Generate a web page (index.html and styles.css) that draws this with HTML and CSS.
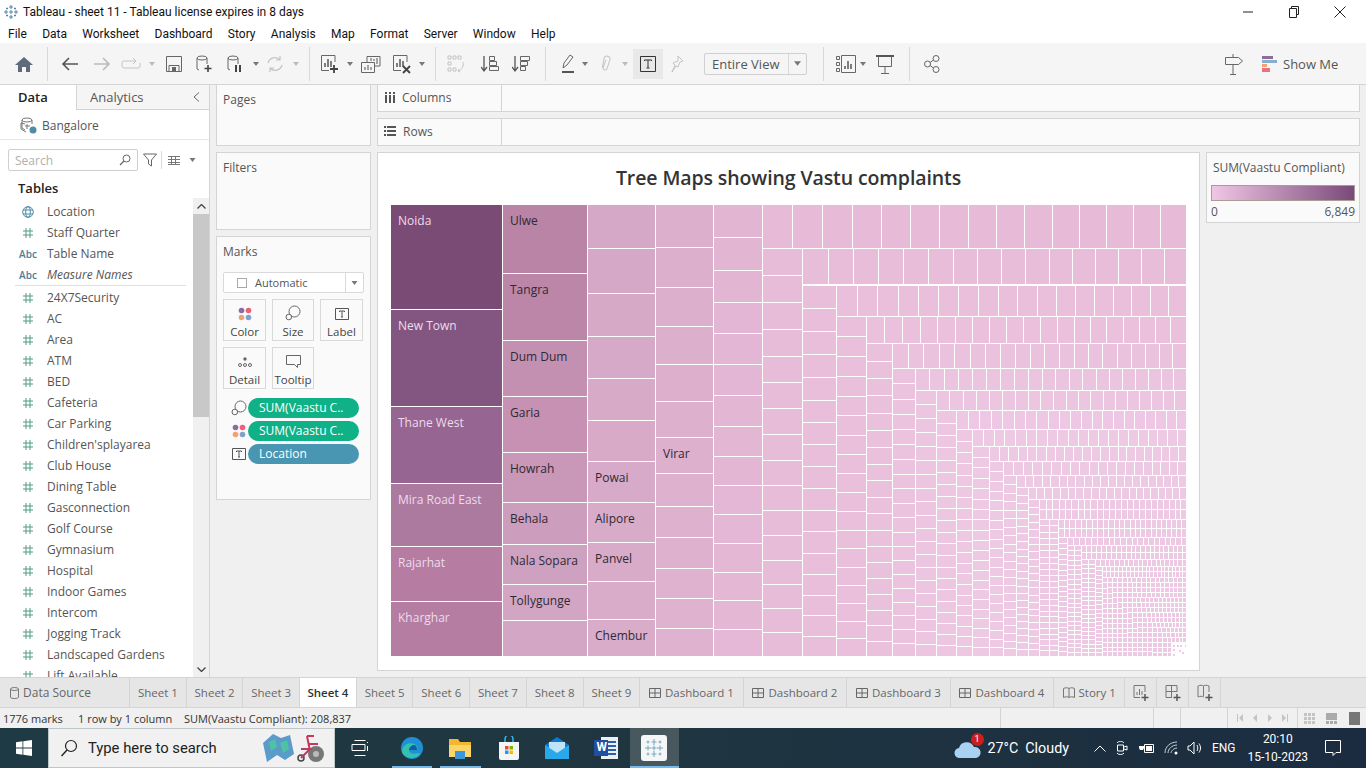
FILE: index.html
```html
<!DOCTYPE html>
<html lang="en">
<head>
  <meta charset="UTF-8" />
  <title>Tableau - sheet 11 - Tableau license expires in 8 days</title>
  <link rel="stylesheet" href="styles.css">
</head>
<body>
  <svg class="defs" width="0" height="0">
    <symbol id="hash" viewBox="0 0 12 12"><path d="M4 1v10M8 1v10M1 4h10M1 8h10" fill="none" stroke="#4d9e80" stroke-width="1"/></symbol>
    <symbol id="caret" viewBox="0 0 6 4"><path d="M0 0h6L3 4z" fill="#777"/></symbol>
    <symbol id="caret-off" viewBox="0 0 6 4"><path d="M0 0h6L3 4z" fill="#bbb"/></symbol>
    <symbol id="t-box" viewBox="0 0 14 14"><path d="M.5 1.500h13v11H.5zM4.500 5V4h5v1M7 4v6M6 10h2" fill="none" stroke="#555"/></symbol>
    <symbol id="size" viewBox="0 0 16 16"><circle cx="9.500" cy="6.500" r="5.500" fill="#fafafa" stroke="#666"/><circle cx="3.800" cy="12" r="2.800" fill="#fafafa" stroke="#666"/></symbol>
    <symbol id="dots" viewBox="0 0 14 14"><circle cx="3.500" cy="3.500" r="2.800" fill="#8a6d9c"/><circle cx="10.500" cy="3.500" r="2.800" fill="#ef5f75"/><circle cx="3.500" cy="10.500" r="2.800" fill="#efa373"/><circle cx="10.500" cy="10.500" r="2.800" fill="#7fa3cf"/></symbol>
    <symbol id="dash" viewBox="0 0 12 12"><path d="M.5 1.500h11v9H.5zM.5 6h11M6 1.500v9" fill="none" stroke="#666"/></symbol>
    <symbol id="add" viewBox="0 0 18 18"><path d="M13 8V1.500H2v12h6" fill="none" stroke="#777"/><path d="M5 11V8M7.500 11V5M10 11V7" stroke="#777"/><path d="M13 10v7M9.500 13.500h7" stroke="#555" stroke-width="1.500"/></symbol>
  </svg>

  <header class="titlebar">
    <svg class="app-logo" width="16" height="16" viewBox="0 0 16 16"><path d="M8 1v4M6 3h4M8 11v4M6 13h4M1 8h4M3 6v4M11 8h4M13 6v4M8 6v4M6 8h4M4 3.500v2M3 4.500h2M12 3.500v2M11 4.500h2M4 10.500v2M3 11.500h2M12 10.500v2M11 11.500h2" stroke="#4f86a8" fill="none"/></svg>
    <span class="title-text">Tableau - sheet 11 - Tableau license expires in 8 days</span>
    <div class="win-btns">
      <svg width="12" height="12" viewBox="0 0 12 12"><path d="M1 6h10" stroke="#222"/></svg>
      <svg width="12" height="12" viewBox="0 0 12 12"><path d="M3.500 2.500V.5h7v8h-2M1.500 2.500h7v9h-7z" fill="none" stroke="#222"/></svg>
      <svg width="12" height="12" viewBox="0 0 12 12"><path d="M.5.5l11 11M11.500.5l-11 11" stroke="#222"/></svg>
    </div>
  </header>

  <nav class="menubar">
    <span>File</span><span>Data</span><span>Worksheet</span><span>Dashboard</span><span>Story</span><span>Analysis</span><span>Map</span><span>Format</span><span>Server</span><span>Window</span><span>Help</span>
  </nav>

  <div class="toolbar">
    <svg width="18" height="16" viewBox="0 0 18 16"><path d="M9 1L0 9h3v7h4v-5h4v5h4V9h3z" fill="#5d6b7a"/></svg>
    <i class="sep"></i>
    <svg width="18" height="16" viewBox="0 0 18 16"><path d="M17 8H2M8 2L2 8l6 6" fill="none" stroke="#555" stroke-width="1.600"/></svg>
    <svg width="18" height="16" viewBox="0 0 18 16"><path d="M1 8h15M10 2l6 6-6 6" fill="none" stroke="#bbb" stroke-width="1.600"/></svg>
    <svg width="20" height="14" viewBox="0 0 20 14"><path d="M14 4H3a2 2 0 0 0-2 2v3a2 2 0 0 0 2 2h14a2 2 0 0 0 2-2V6M12 1l3 3-3 3" fill="none" stroke="#c4c4c4"/></svg>
    <svg width="6" height="4"><use href="#caret-off"/></svg>
    <svg width="16" height="16" viewBox="0 0 16 16"><path d="M.5.5h15v15H.5zM3 9.500h10v6H3z" fill="none" stroke="#666"/><path d="M6 11h4v4H6z" fill="#666"/></svg>
    <svg width="18" height="18" viewBox="0 0 18 18"><ellipse cx="6" cy="3" rx="5" ry="2" fill="none" stroke="#666"/><path d="M1 3v11l2 1M11 3v6" fill="none" stroke="#666"/><path d="M12 10v7M8.500 13.500h7" stroke="#444" stroke-width="1.600"/></svg>
    <svg width="18" height="18" viewBox="0 0 18 18"><ellipse cx="6" cy="3" rx="5" ry="2" fill="none" stroke="#666"/><path d="M1 3v11l2 1M11 3v6" fill="none" stroke="#666"/><path d="M9 10v7M13 10v7" stroke="#444" stroke-width="2"/></svg>
    <svg width="6" height="4"><use href="#caret"/></svg>
    <svg width="18" height="18" viewBox="0 0 18 18"><path d="M2 8a7 7 0 0 1 12-3M16 10a7 7 0 0 1-12 3M14 1v4h-4M4 17v-4h4" fill="none" stroke="#c4c4c4" stroke-width="1.200"/></svg>
    <svg width="6" height="4"><use href="#caret-off"/></svg>
    <i class="sep"></i>
    <svg width="20" height="20" viewBox="0 0 20 20"><path d="M15 8V1.500H1.500v15H9" fill="none" stroke="#666"/><path d="M5 13V9M8 13V5M11 13V7" stroke="#555" stroke-width="1.500"/><path d="M14 11v8M10 15h8" stroke="#444" stroke-width="1.800"/></svg>
    <svg width="6" height="4"><use href="#caret"/></svg>
    <svg width="20" height="18" viewBox="0 0 20 18"><path d="M6 7V1.500h13V11h-5" fill="none" stroke="#666"/><path d="M.5 7.500h13v10H.5z" fill="#f5f5f5" stroke="#666"/><path d="M10 6V3M13 6V4M16 9V3M4 15v-3M7 15v-5M10 15v-3" stroke="#555"/></svg>
    <svg width="20" height="20" viewBox="0 0 20 20"><path d="M15 8V1.500H1.500v15H9" fill="none" stroke="#666"/><path d="M5 13V9M8 13V5M11 13V7" stroke="#555" stroke-width="1.500"/><path d="M11 12l7 7M18 12l-7 7" stroke="#444" stroke-width="1.800"/></svg>
    <svg width="6" height="4"><use href="#caret"/></svg>
    <i class="sep"></i>
    <svg width="18" height="18" viewBox="0 0 18 18"><path d="M1 1h3v3H1zM6 1h3v3H6zM11 1h3v3h-3zM1 7h3v3H1zM1 13h3v3H1zM6 13h3v3H6z" fill="none" stroke="#c4c4c4"/><path d="M16 7c1 4-1 8-5 9M12 14l-1 2 2 1" fill="none" stroke="#c4c4c4"/></svg>
    <svg width="18" height="18" viewBox="0 0 18 18"><path d="M3 1v14M0 12l3 4 3-4" fill="none" stroke="#555" stroke-width="1.300"/><path d="M8.500 1.500h5v4h-5zM8.500 6.500h7v4h-7zM8.500 11.500h9v4h-9z" fill="none" stroke="#666"/></svg>
    <svg width="18" height="18" viewBox="0 0 18 18"><path d="M3 1v14M0 12l3 4 3-4" fill="none" stroke="#555" stroke-width="1.300"/><path d="M8.500 1.500h9v4h-9zM8.500 6.500h7v4h-7zM8.500 11.500h5v4h-5z" fill="none" stroke="#666"/></svg>
    <i class="sep"></i>
    <svg width="14" height="20" viewBox="0 0 14 20"><path d="M2 14l1-5 6-8 3 2-6 8z" fill="none" stroke="#666"/><path d="M1 18h12" stroke="#555" stroke-width="2"/></svg>
    <svg width="6" height="4"><use href="#caret"/></svg>
    <svg width="12" height="20" viewBox="0 0 12 20"><path d="M3 14V5a3 3 0 0 1 6 0l-1 9a2 2 0 0 1-4 0l1-8" fill="none" stroke="#c4c4c4" transform="rotate(12 6 10)"/></svg>
    <svg width="6" height="4"><use href="#caret-off"/></svg>
    <div class="tool-on"><svg width="16" height="16" viewBox="0 0 16 16"><path d="M.5.5h15v15H.5zM4.500 5V4h7v1M8 4v8M6.500 12h3" fill="none" stroke="#333"/></svg></div>
    <svg width="14" height="18" viewBox="0 0 14 18"><path d="M8 1l5 5-3 1-2 5-2-1-4 6 3-7-2-2 5-2z" fill="none" stroke="#c4c4c4"/></svg>
    <div class="fit-select"><span>Entire View</span><b><svg width="7" height="5"><use href="#caret"/></svg></b></div>
    <i class="sep"></i>
    <div class="tool-pair">
      <svg width="20" height="18" viewBox="0 0 20 18"><path d="M.5 1.500h3v3h-3zM.5 7.500h3v3h-3zM.5 13.500h3v3h-3zM5.500.5h14v17h-14z" fill="none" stroke="#666"/><path d="M9 14v-3M12 14V6M15 14V9" stroke="#555" stroke-width="1.500"/></svg>
      <svg width="6" height="4"><use href="#caret"/></svg>
    </div>
    <svg width="18" height="20" viewBox="0 0 18 20"><path d="M0 2h18" stroke="#555" stroke-width="2"/><path d="M2.500 2.500v10h13v-10M9 13v6M5 19.500h8" fill="none" stroke="#666"/></svg>
    <i class="sep"></i>
    <svg width="16" height="18" viewBox="0 0 16 18"><circle cx="3.500" cy="9" r="3" fill="none" stroke="#666"/><circle cx="12" cy="3.500" r="3" fill="none" stroke="#666"/><circle cx="12" cy="14.500" r="3" fill="none" stroke="#666"/><path d="M6 7.500l3.500-2.500M6 10.500l3.500 2.500" stroke="#666"/></svg>
    <div></div>
    <svg width="18" height="22" viewBox="0 0 18 22"><path d="M.5 4.500h13l4 3.500-4 3.500H.5zM8 1v3.500M8 11.500V21M5 21.500h6" fill="none" stroke="#666"/></svg>
    <div class="show-me">
      <svg class="show-me-icon" width="15" height="16" viewBox="0 0 15 16"><path d="M0 0h11v3H0z" fill="#8a6d9c"/><path d="M0 4h15v3H0z" fill="#85aed0"/><path d="M0 8h5v3H0z" fill="#efa373"/><path d="M0 12h8v4H0z" fill="#ef6f80"/></svg>
      <span>Show Me</span>
    </div>
  </div>

  <main class="workspace">
    <aside class="data-pane">
      <div class="pane-tabs">
        <div class="pane-tab active">Data</div>
        <div class="pane-tab">Analytics</div>
        <svg class="collapse" width="7" height="10" viewBox="0 0 7 10"><path d="M6 .5L1 5l5 4.500" fill="none" stroke="#666"/></svg>
      </div>
      <div class="source">
        <svg width="17" height="17" viewBox="0 0 17 17"><ellipse cx="7" cy="3" rx="5" ry="2" fill="none" stroke="#777"/><path d="M2 3v8l3 2M12 3v4M5 7l-4-1v6l5 3" fill="none" stroke="#777"/><path d="M5 9h5M7 7v5" stroke="#777"/><circle cx="13" cy="13" r="3.500" fill="#4e8ca8"/></svg>
        <span>Bangalore</span>
      </div>
      <div class="search-row">
        <div class="search-box"><span>Search</span>
          <svg width="12" height="12" viewBox="0 0 12 12"><circle cx="7.500" cy="4.500" r="3.500" fill="none" stroke="#666"/><path d="M5 7l-4 4" stroke="#666" stroke-width="1.300"/></svg>
        </div>
        <svg width="14" height="14" viewBox="0 0 14 14"><path d="M.5 1h13L8.500 7v6l-3-2V7z" fill="none" stroke="#666"/></svg>
        <i class="vline"></i>
        <svg width="12" height="9" viewBox="0 0 12 9"><path d="M0 .5h12M0 3.500h12M0 6.500h12M0 8.500h12M3.500 0v9M7.500 0v9" stroke="#777"/></svg>
        <svg class="search-caret" width="7" height="4"><use href="#caret"/></svg>
      </div>
      <h2 class="tables-head">Tables</h2>
      <div class="fields">
        <ul class="field-list">
          <li><span class="ficon"><svg width="12" height="12" viewBox="0 0 12 12"><circle cx="6" cy="6" r="5.300" fill="none" stroke="#4e8ca8"/><ellipse cx="6" cy="6" rx="2.300" ry="5.300" fill="none" stroke="#4e8ca8"/><path d="M1 4h10M1 8h10" stroke="#4e8ca8"/></svg></span>Location</li>
          <li><span class="ficon"><svg width="12" height="12"><use href="#hash"/></svg></span>Staff Quarter</li>
          <li><span class="ficon abc">Abc</span>Table Name</li>
          <li class="last-dim"><span class="ficon abc">Abc</span><em>Measure Names</em></li>
          <li><span class="ficon"><svg width="12" height="12"><use href="#hash"/></svg></span>24X7Security</li>
          <li><span class="ficon"><svg width="12" height="12"><use href="#hash"/></svg></span>AC</li>
          <li><span class="ficon"><svg width="12" height="12"><use href="#hash"/></svg></span>Area</li>
          <li><span class="ficon"><svg width="12" height="12"><use href="#hash"/></svg></span>ATM</li>
          <li><span class="ficon"><svg width="12" height="12"><use href="#hash"/></svg></span>BED</li>
          <li><span class="ficon"><svg width="12" height="12"><use href="#hash"/></svg></span>Cafeteria</li>
          <li><span class="ficon"><svg width="12" height="12"><use href="#hash"/></svg></span>Car Parking</li>
          <li><span class="ficon"><svg width="12" height="12"><use href="#hash"/></svg></span>Children'splayarea</li>
          <li><span class="ficon"><svg width="12" height="12"><use href="#hash"/></svg></span>Club House</li>
          <li><span class="ficon"><svg width="12" height="12"><use href="#hash"/></svg></span>Dining Table</li>
          <li><span class="ficon"><svg width="12" height="12"><use href="#hash"/></svg></span>Gasconnection</li>
          <li><span class="ficon"><svg width="12" height="12"><use href="#hash"/></svg></span>Golf Course</li>
          <li><span class="ficon"><svg width="12" height="12"><use href="#hash"/></svg></span>Gymnasium</li>
          <li><span class="ficon"><svg width="12" height="12"><use href="#hash"/></svg></span>Hospital</li>
          <li><span class="ficon"><svg width="12" height="12"><use href="#hash"/></svg></span>Indoor Games</li>
          <li><span class="ficon"><svg width="12" height="12"><use href="#hash"/></svg></span>Intercom</li>
          <li><span class="ficon"><svg width="12" height="12"><use href="#hash"/></svg></span>Jogging Track</li>
          <li><span class="ficon"><svg width="12" height="12"><use href="#hash"/></svg></span>Landscaped Gardens</li>
          <li><span class="ficon"><svg width="12" height="12"><use href="#hash"/></svg></span>Lift Available</li>
        </ul>
        <div class="scrollbar">
          <svg width="9" height="5" viewBox="0 0 9 5"><path d="M.5 4.500l4-4 4 4" fill="none" stroke="#444" stroke-width="1.300"/></svg>
          <div class="scroll-track"><div class="scroll-thumb"></div></div>
          <svg width="9" height="5" viewBox="0 0 9 5"><path d="M.5.5l4 4 4-4" fill="none" stroke="#444" stroke-width="1.300"/></svg>
        </div>
      </div>
    </aside>

    <section class="cards">
      <div class="card card-pages">Pages</div>
      <div class="card card-filters">Filters</div>
      <div class="card card-marks">
        <div>Marks</div>
        <div class="mark-select">
          <span class="mark-check"></span><span class="mark-type">Automatic</span>
          <b><svg width="7" height="4"><use href="#caret"/></svg></b>
        </div>
        <div class="mark-btns">
          <div class="mark-btn"><svg width="14" height="14"><use href="#dots"/></svg>Color</div>
          <div class="mark-btn"><svg width="16" height="16"><use href="#size"/></svg>Size</div>
          <div class="mark-btn"><svg width="14" height="14"><use href="#t-box"/></svg>Label</div>
          <div class="mark-btn"><svg width="14" height="14" viewBox="0 0 14 14"><circle cx="7" cy="4" r="1.700" fill="#666"/><circle cx="2" cy="10" r="1.500" fill="none" stroke="#666"/><circle cx="7" cy="10" r="1.500" fill="none" stroke="#666"/><circle cx="12" cy="10" r="1.500" fill="none" stroke="#666"/></svg>Detail</div>
          <div class="mark-btn"><svg width="15" height="15" viewBox="0 0 15 15"><path d="M.5 1.500h14v9h-3v3l-3-3h-8z" fill="none" stroke="#666"/></svg>Tooltip</div>
        </div>
        <div class="pills">
          <svg width="16" height="16"><use href="#size"/></svg><div class="pill green">SUM(Vaastu C..</div>
          <svg width="14" height="14"><use href="#dots"/></svg><div class="pill green">SUM(Vaastu C..</div>
          <svg width="14" height="14"><use href="#t-box"/></svg><div class="pill blue">Location</div>
        </div>
      </div>
    </section>

    <section class="canvas">
      <div class="shelf">
        <div class="shelf-label"><svg width="11" height="11" viewBox="0 0 11 11"><path d="M1 0h2v2H1zM5 0h2v2H5zM9 0h2v2H9zM1 3h2v8H1zM5 3h2v8H5zM9 3h2v8H9z" fill="#555"/></svg>Columns</div>
      </div>
      <div class="shelf">
        <div class="shelf-label"><svg width="12" height="10" viewBox="0 0 12 10"><path d="M0 0h2v2H0zM3 0h9v2H3zM0 4h2v2H0zM3 4h9v2H3zM0 8h2v2H0zM3 8h9v2H3z" fill="#555"/></svg>Rows</div>
      </div>
      <div class="view-row">
        <div class="view">
          <h1 class="view-title">Tree Maps showing Vastu complaints</h1>
          <svg id="treemap" class="treemap" width="795" height="451" viewBox="391 205 795 451"></svg>
        </div>
        <div class="legend">
          <div class="legend-title">SUM(Vaastu Compliant)</div>
          <div class="legend-bar"></div>
          <div class="legend-scale"><span>0</span><span>6,849</span></div>
        </div>
      </div>
    </section>
  </main>

  <div class="tabbar">
    <div class="tab tab-source"><svg width="9" height="12" viewBox="0 0 9 12"><ellipse cx="4.500" cy="2" rx="4" ry="1.500" fill="none" stroke="#777"/><path d="M.5 2v8c0 1 1.500 1.500 4 1.500s4-.5 4-1.500V2" fill="none" stroke="#777"/></svg>Data Source</div>
    <div class="tab tab-s1">Sheet 1</div>
    <div class="tab tab-s1">Sheet 2</div>
    <div class="tab tab-s1">Sheet 3</div>
    <div class="tab tab-s1 current">Sheet 4</div>
    <div class="tab tab-s1">Sheet 5</div>
    <div class="tab tab-s1">Sheet 6</div>
    <div class="tab tab-s1">Sheet 7</div>
    <div class="tab tab-s1">Sheet 8</div>
    <div class="tab tab-s1">Sheet 9</div>
    <div class="tab tab-dash"><svg width="12" height="12"><use href="#dash"/></svg>Dashboard 1</div>
    <div class="tab tab-dash"><svg width="12" height="12"><use href="#dash"/></svg>Dashboard 2</div>
    <div class="tab tab-dash"><svg width="12" height="12"><use href="#dash"/></svg>Dashboard 3</div>
    <div class="tab tab-dash"><svg width="12" height="12"><use href="#dash"/></svg>Dashboard 4</div>
    <div class="tab tab-story"><svg width="12" height="12" viewBox="0 0 12 12"><path d="M.5 1.500c2-1 4-1 5.500 0 1.500-1 3.500-1 5.500 0v9c-2-1-4-1-5.500 0-1.500-1-3.500-1-5.500 0zM6 1.500v9" fill="none" stroke="#777"/></svg>Story 1</div>
    <div class="tab tab-add"><svg width="18" height="18"><use href="#add"/></svg></div>
    <div class="tab tab-add"><svg width="18" height="18" viewBox="0 0 18 18"><path d="M13 8V1.500H2v12h6M2 7.500h11M7.500 1.500v12" fill="none" stroke="#777"/><path d="M13 10v7M9.500 13.500h7" stroke="#555" stroke-width="1.500"/></svg></div>
    <div class="tab tab-add"><svg width="18" height="18" viewBox="0 0 18 18"><path d="M13 8V2c-2-1-4-1-5.500 0C6 1 4 1 2 2v11c2-1 4-1 6 0M7.500 2v10" fill="none" stroke="#777"/><path d="M13 10v7M9.500 13.500h7" stroke="#555" stroke-width="1.500"/></svg></div>
  </div>

  <footer class="statusbar">
    <div class="status-main"><span>1776 marks</span><span>1 row by 1 column</span><span>SUM(Vaastu Compliant): 208,837</span></div>
    <i class="status-cell s1"></i><i class="status-cell s2"></i><i class="status-cell s3"></i>
    <div class="status-nav">
      <svg width="6" height="8" viewBox="0 0 6 8"><path d="M0 0h1v8H0zM6 0v8L2 4z" fill="#c4c4c4"/></svg>
      <svg width="6" height="8" viewBox="0 0 6 8"><path d="M5 0v8L1 4z" fill="#c4c4c4"/></svg>
      <svg width="6" height="8" viewBox="0 0 6 8"><path d="M1 0v8l4-4z" fill="#c4c4c4"/></svg>
      <svg width="6" height="8" viewBox="0 0 6 8"><path d="M0 0v8l4-4zM5 0h1v8H5z" fill="#c4c4c4"/></svg>
    </div>
    <div class="status-views">
      <svg width="11" height="11" viewBox="0 0 11 11"><path d="M0 0h3v3H0zM4 0h3v3H4zM8 0h3v3H8zM0 4h3v3H0zM4 4h3v3H4zM8 4h3v3H8zM0 8h3v3H0zM4 8h3v3H4zM8 8h3v3H8z" fill="#c4c4c4"/></svg>
      <svg width="11" height="11" viewBox="0 0 11 11"><path d="M0 0h11v7H0zM0 8h3v3H0zM4 8h3v3H4zM8 8h3v3H8z" fill="#aaa"/></svg>
      <svg width="11" height="13" viewBox="0 0 11 13"><path d="M0 0h11v13H0z" fill="#777"/></svg>
    </div>
  </footer>

  <div class="taskbar">
    <svg class="start" width="16" height="16" viewBox="0 0 16 16"><path d="M0 2.200l6.500-.9v6.200H0zM7.300 1.200L16 0v7.500H7.300zM0 8.400h6.500v6.300L0 13.800zM7.300 8.400H16V16l-8.700-1.200z" fill="#fff"/></svg>
    <div class="task-search">
      <svg width="18" height="18" viewBox="0 0 18 18"><circle cx="11" cy="7" r="5.500" fill="none" stroke="#222" stroke-width="1.200"/><path d="M7 11l-5.500 6" stroke="#222" stroke-width="1.400"/></svg>
      <span>Type here to search</span>
      <svg class="search-art" width="66" height="34" viewBox="0 0 66 34"><path d="M2 12L12 3l8 4 9-3 4 19-9 6-8-5-10 7z" fill="#5b9bc9"/><path d="M8 11l6-3 2 8-6 4zM19 12l7-3 2 9-6 4z" fill="#4ec2a5"/><path d="M46 5h7M46 5l3 15h9M48 13h9" fill="none" stroke="#c2395b" stroke-width="2"/><circle cx="55" cy="23" r="8" fill="#777"/><circle cx="55" cy="23" r="3" fill="#bbb"/><circle cx="40" cy="27" r="3" fill="none" stroke="#444" stroke-width="1.500"/><path d="M40 18h9l-9 9" fill="none" stroke="#c2395b" stroke-width="2"/></svg>
    </div>
    <div class="task-icons">
      <div class="task-app"><svg width="18" height="18" viewBox="0 0 18 18"><path d="M3.500 1.500h11M1 5.500h13v6H1zM3.500 16.500h11M16.500 3v1M16.500 7v5" fill="none" stroke="#fff"/></svg></div>
      <div class="task-app open"><svg width="24" height="24" viewBox="0 0 24 24"><circle cx="12" cy="12" r="11" fill="#1f8fd6"/><path d="M2 15c1-7 8-9 12-7 3 1 4 4 3 6H9c0 3 4 5 9 3l2 1c-3 4-9 5-13 3-3-1-5-3-5-6z" fill="#35c1b0"/><path d="M9 14c0-3 3-5 5-5s3 2 3 5z" fill="#0f5fa6"/></svg></div>
      <div class="task-app open"><svg width="24" height="22" viewBox="0 0 24 22"><path d="M1 2h9l2 3h11v15H1z" fill="#f2b632"/><path d="M1 8h22v12H1z" fill="#fbd568"/><path d="M7 14h10v8H7z" fill="#3a96dd"/></svg></div>
      <div class="task-app"><svg width="22" height="24" viewBox="0 0 22 24"><path d="M7 6V3a4 4 0 0 1 8 0v3" fill="none" stroke="#35b8e8" stroke-width="1.500"/><path d="M1 6h20v16a2 2 0 0 1-2 2H3a2 2 0 0 1-2-2z" fill="#f5f5f5"/><path d="M7 10h3.500v3.500H7z" fill="#e74c2e"/><path d="M11.500 10H15v3.500h-3.500z" fill="#7ab800"/><path d="M7 14.500h3.500V18H7z" fill="#1e9be8"/><path d="M11.500 14.500H15V18h-3.500z" fill="#fbb900"/></svg></div>
      <div class="task-app"><svg width="24" height="22" viewBox="0 0 24 22"><path d="M12 0L0 8v14h24V8z" fill="#0f78d4"/><path d="M4 5h16v9l-8 4-8-4z" fill="#bfe4f8"/><path d="M0 8l12 8 12-8v14H0z" fill="#29a8ea"/></svg></div>
      <div class="task-app word"><svg width="24" height="22" viewBox="0 0 24 22"><path d="M7 0h17v22H7z" fill="#e9eef7"/><path d="M14 5h8M14 9h8M14 13h8M14 17h8" stroke="#2b5fad" stroke-width="2"/><path d="M0 3h14v16H0z" fill="#1f4f9e"/></svg><span>W</span></div>
      <div class="task-app current"><svg width="26" height="26" viewBox="0 0 26 26"><rect width="26" height="26" rx="3" fill="#f4f6f7"/><path d="M13 4v6M10.500 7h5M13 16v6M10.500 19h5M4 13h6M7 10.500v5M16 13h6M19 10.500v5M13 10.500v5M10.500 13h5M7 5.500v3M5.500 7h3M19 5.500v3M17.500 7h3M7 17.500v3M5.500 19h3M19 17.500v3M17.500 19h3" stroke="#7aa6bd" fill="none"/></svg></div>
    </div>
    <div class="tray">
      <div class="weather">
        <svg width="28" height="24" viewBox="0 0 28 24"><path d="M6 22a5 5 0 0 1-1-10 8 8 0 0 1 15-1 5.500 5.500 0 0 1 2 11z" fill="#a9d1f2"/></svg>
        <span class="weather-badge">1</span>
      </div>
      <span class="temp">27°C&nbsp; Cloudy</span>
      <svg class="t-chev" width="12" height="7" viewBox="0 0 12 7"><path d="M.5 6.500L6 1l5.500 5.500" fill="none" stroke="#fff"/></svg>
      <svg class="t-meet" width="12" height="18" viewBox="0 0 12 18"><path d="M1 4c1-2 6-2 7 0M1 14c1 2 6 2 7 0M1.500 6h6v6h-6zM8 8l3-1v4l-3-1" fill="none" stroke="#fff"/></svg>
      <svg class="t-batt" width="16" height="12" viewBox="0 0 16 12"><path d="M5.500 2.500h9v8h-9z" fill="none" stroke="#fff"/><path d="M7 4h6v5H7zM1 0v4M4 0v4M0 4h5v2l-1 2H1L0 6z" fill="#fff"/></svg>
      <svg class="t-wifi" width="15" height="14" viewBox="0 0 15 14"><path d="M1 12C1 6 6 1 13 1M4 12c0-4 4-8 9-8M7 12c0-2 3-5 6-5" fill="none" stroke="#c9d1d6"/><circle cx="12" cy="12" r="1.500" fill="#fff"/></svg>
      <svg class="t-vol" width="16" height="14" viewBox="0 0 16 14"><path d="M1 5h2l4-4v12l-4-4H1zM10 4c1 2 1 4 0 6M12 2.500c2 3 2 6 0 9" fill="none" stroke="#fff"/></svg>
      <span class="t-lang">ENG</span>
      <div class="clock"><div>20:10</div><div>15-10-2023</div></div>
      <svg class="t-note" width="16" height="16" viewBox="0 0 16 16"><path d="M.5.5h15v12H11l-3 3v-3H.5z" fill="none" stroke="#fff"/></svg>
    </div>
  </div>

  <script src="chart.js"></script>
</body>
</html>
```

FILE: styles.css
```css
:root {
  --line: #d4d4d4;
  --panel: #fafafa;
  --bar: #f5f5f5;
  --text: #555555;
  --ui-font: "Open Sans", "Liberation Sans", sans-serif;
  --win-font: Roboto, "Liberation Sans", sans-serif;
}

* {
  box-sizing: border-box;
  margin: 0;
  padding: 0;
}

html, body {
  height: 768px;
  overflow: hidden;
}

body {
  display: flex;
  flex-direction: column;
  width: 1366px;
  background: #f5f5f5;
  color: var(--text);
  font: 12px var(--ui-font);
}

.defs { position: absolute; }
svg { display: block; flex: none; }

/* Window title + menu */
.titlebar {
  display: flex;
  align-items: center;
  height: 24px;
  padding-left: 3px;
  background: #fff;
  color: #111;
  font-family: var(--win-font);
}
.title-text { margin-left: 4px; }
.win-btns {
  display: flex;
  gap: 34px;
  margin-left: auto;
  margin-right: 20px;
}

.menubar {
  display: flex;
  align-items: center;
  gap: 15.300px;
  height: 19px;
  padding-left: 8px;
  background: #fff;
  color: #111;
  font-family: var(--win-font);
}

/* Toolbar: one track per tool, so each icon centres on its own place */
.toolbar {
  display: grid;
  grid-template-columns: 36px 11px 34px 30px 28px 14px 30px 32px 30px 10px 28px 14px 12px 30px 10px 32px 30px 10px 16px 26px 42px 20px 28px 18px 16px 26px 12px 34px 24px 133px 2px 54px 14px 34px 12px 1fr 28px 97px;
  align-items: center;
  justify-items: center;
  height: 41px;
  padding-left: 6px;
  padding-right: 21px;
  background: var(--bar);
}
.sep {
  display: block;
  width: 1px;
  height: 34px;
  background: #d9d9d9;
}
.tool-on {
  display: flex;
  align-items: center;
  justify-content: center;
  width: 30px;
  height: 30px;
  background: #e8e8e8;
}
.fit-select {
  display: flex;
  align-items: center;
  width: 103px;
  height: 22px;
  padding-left: 7px;
  background: var(--bar);
  border: 1px solid #cfcfcf;
  border-radius: 2px;
  font-size: 13px;
}
.fit-select span { flex: 1; }
.fit-select b {
  display: flex;
  align-items: center;
  justify-content: center;
  width: 18px;
  height: 100%;
  border-left: 1px solid #d9d9d9;
}
.tool-pair {
  display: flex;
  align-items: center;
  gap: 4px;
}
.show-me {
  display: flex;
  align-items: center;
  gap: 6px;
  justify-self: start;
  margin-left: 14px;
  font-size: 13px;
}

/* Main area */
.workspace {
  display: flex;
  height: 593px;
  gap: 6px;
  padding-right: 6px;
  border-top: 1px solid var(--line);
  background: #f0f0f0;
}

.data-pane {
  display: flex;
  flex-direction: column;
  width: 210px;
  background: #fff;
  border-right: 1px solid var(--line);
}
.pane-tabs {
  display: flex;
  align-items: center;
  height: 25px;
  background: var(--bar);
  border-bottom: 1px solid var(--line);
  font-size: 13px;
}
.pane-tab {
  width: 77px;
  height: 25px;
  padding: 3px 0 0 18px;
}
.pane-tab.active {
  background: #fff;
  border-right: 1px solid var(--line);
  color: #222;
  font-weight: 600;
}
.pane-tab:nth-child(2) { padding-left: 13px; width: 112px; }
.collapse { margin-left: 4px; }
.source {
  display: flex;
  align-items: center;
  gap: 5px;
  height: 30px;
  padding: 1px 0 0 20px;
  border-bottom: 1px solid #e6e6e6;
}
.search-row {
  display: flex;
  align-items: center;
  height: 22px;
  margin-top: 9px;
  padding-left: 8px;
}
.search-box {
  display: flex;
  align-items: center;
  justify-content: space-between;
  width: 130px;
  height: 22px;
  padding: 0 6px;
  border: 1px solid #cfcfcf;
  border-radius: 2px;
  color: #b0b0b0;
}
.search-row > svg:nth-child(2) { margin-left: 5px; }
.vline {
  display: block;
  width: 1px;
  height: 18px;
  margin: 0 6px 0 4px;
  background: #d9d9d9;
}
.search-caret { margin-left: 9px; }
.tables-head {
  margin: 8px 0 1px 18px;
  color: #222;
  font-size: 13px;
  font-weight: 600;
  line-height: 18px;
}
.fields {
  display: flex;
  flex: 1;
  min-height: 0;
  overflow: hidden;
}
.field-list {
  width: 193px;
  list-style: none;
  padding-top: 3px;
}
.field-list li {
  display: flex;
  align-items: center;
  height: 21px;
}
.last-dim { position: relative; }
.last-dim em { font-style: italic; }
.field-list li:nth-child(4) { margin-bottom: 2px; height: 21px; }
.field-list li:nth-child(4)::after {
  content: "";
  position: absolute;
  left: 15px;
  right: 7px;
  bottom: -1px;
  height: 1px;
  background: #e0e0e0;
}
.ficon {
  display: flex;
  align-items: center;
  justify-content: center;
  width: 26px;
  margin: 0 6px 0 15px;
}
.abc {
  color: #4e7c97;
  font-size: 10px;
  font-weight: 600;
}
.scrollbar {
  display: flex;
  flex-direction: column;
  align-items: center;
  width: 16px;
  background: #f0f0f0;
  padding: 6px 0 5px;
}
.scroll-track { flex: 1; width: 100%; margin: 5px 0; }
.scroll-thumb { height: 203px; background: #c8c8c8; }

/* Pages / Filters / Marks */
.cards {
  display: flex;
  flex-direction: column;
  gap: 6px;
  width: 155px;
  padding-bottom: 177px;
}
.card {
  padding: 6px 6px 0;
  background: var(--panel);
  border: 1px solid var(--line);
}
.card-pages { height: 61px; border-top: 0; }
.card-filters { height: 78px; }
.card-marks { flex: 1; }
.mark-select {
  display: flex;
  align-items: center;
  height: 21px;
  margin-top: 12px;
  background: #fff;
  border: 1px solid #d9d9d9;
  border-radius: 2px;
  font-size: 11px;
}
.mark-check {
  width: 10px;
  height: 10px;
  margin-left: 13px;
  border: 1px solid #aaa;
}
.mark-type { margin-left: 8px; flex: 1; }
.mark-select b {
  display: flex;
  align-items: center;
  justify-content: center;
  width: 18px;
  height: 100%;
  border-left: 1px solid #d9d9d9;
}
.mark-btns {
  display: grid;
  grid-template-columns: 43px 42px 43px;
  gap: 6px;
  margin-top: 6px;
}
.mark-btn {
  display: flex;
  flex-direction: column;
  align-items: center;
  justify-content: flex-end;
  gap: 3px;
  height: 42px;
  padding-bottom: 1px;
  border: 1px solid #d9d9d9;
  font-size: 11.500px;
  color: #444;
}
.pills {
  display: grid;
  grid-template-columns: 19px 111px;
  gap: 3px 0;
  justify-items: center;
  align-items: center;
  margin: 9px 0 0 6px;
}
.pill {
  justify-self: stretch;
  height: 20px;
  padding-left: 11px;
  border-radius: 10px;
  color: #fff;
  line-height: 19px;
}
.green { background: #0fb187; }
.blue { background: #4996b2; }

/* Shelves + view */
.canvas {
  display: flex;
  flex: 1;
  flex-direction: column;
  gap: 6px;
  padding-bottom: 6px;
}
.shelf {
  height: 28px;
  background: var(--panel);
  border: 1px solid var(--line);
}
.shelf:first-child { border-top: 0; height: 27px; }
.shelf-label {
  display: flex;
  align-items: center;
  gap: 7px;
  width: 124px;
  height: 100%;
  padding: 0 0 2px 6px;
  border-right: 1px solid var(--line);
}
.view-row {
  display: flex;
  flex: 1;
  gap: 6px;
  align-items: flex-start;
}
.view {
  display: flex;
  flex-direction: column;
  align-items: flex-start;
  width: 823px;
  height: 519px;
  padding: 0 13px;
  background: #fff;
  border: 1px solid var(--line);
}
.view-title {
  align-self: center;
  height: 52px;
  padding-top: 11px;
  color: #333;
  font-size: 19.500px;
  font-weight: 600;
  letter-spacing: -.1px;
  line-height: 28px;
}
.treemap text {
  font: 12px var(--ui-font);
}
.legend {
  flex: 1;
  height: 71px;
  padding: 6px 4px 0;
  background: var(--panel);
  border: 1px solid var(--line);
}
.legend-title { padding-left: 2px; margin-bottom: 9px; }
.legend-bar {
  height: 16px;
  background: linear-gradient(90deg, #f0c6e6, #7a4a78);
  border: 1px solid #a89c94;
}
.legend-scale {
  display: flex;
  justify-content: space-between;
  margin-top: 2px;
}

/* Sheet tabs */
.tabbar {
  display: flex;
  height: 31px;
  background: #e6e6e6;
  border-top: 1px solid var(--line);
  border-bottom: 1px solid var(--line);
  color: #666;
  font-size: 11.500px;
}
.tab {
  display: flex;
  align-items: center;
  justify-content: center;
  gap: 4px;
  border-right: 1px solid var(--line);
}
.tab-source { width: 130px; justify-content: flex-start; padding-left: 10px; font-size: 12px; }
.tab-s1 { width: 56.700px; }
.tab-dash { width: 103.500px; }
.tab-story { width: 71px; }
.tab-add { width: 32px; }
.tab.current {
  background: #fff;
  color: #333;
  font-weight: 600;
}

/* Status bar */
.statusbar {
  display: flex;
  align-items: center;
  height: 20px;
  background: #f0f0f0;
  font-size: 11px;
  color: #333;
}
.status-main {
  display: flex;
  width: 1000px;
  padding-left: 3px;
}
.status-main span:nth-child(1) { width: 75px; }
.status-main span:nth-child(2) { width: 106px; }
.status-cell {
  display: block;
  height: 100%;
  border-left: 1px solid var(--line);
}
.s1 { width: 153px; }
.s2 { width: 27px; }
.s3 { width: 47px; }
.status-nav {
  display: flex;
  justify-content: space-between;
  width: 71px;
  height: 100%;
  align-items: center;
  padding: 0 9px;
  border-left: 1px solid var(--line);
  border-right: 1px solid var(--line);
}
.status-views {
  display: flex;
  flex: 1;
  justify-content: space-around;
  align-items: center;
}

/* Windows taskbar */
.taskbar {
  display: flex;
  align-items: center;
  height: 40px;
  background: linear-gradient(90deg, #1e3a44, #1f3640 45%, #1b2c40);
  color: #fff;
  font-family: var(--win-font);
}
.start { margin: 0 16px 0 16px; }
.task-search {
  display: flex;
  align-items: center;
  width: 287px;
  height: 40px;
  padding-left: 11px;
  background: #f1f1f1;
  border: 1px solid #bfc6ca;
  color: #222;
  font-size: 14.800px;
}
.task-search span { margin-left: 10px; }
.search-art { margin-left: auto; margin-right: 7px; }
.task-icons {
  display: flex;
  margin-left: 1px;
}
.task-app {
  display: flex;
  position: relative;
  align-items: center;
  justify-content: center;
  width: 48.500px;
  height: 40px;
  color: #fff;
}
.task-app:first-child { margin-right: 3px; }
.task-app.open::after, .task-app.current::after {
  content: "";
  position: absolute;
  left: 4px;
  right: 4px;
  bottom: 0;
  height: 2px;
  background: #76b9ed;
}
.task-app.current { background: #47585f; }
.task-app.current::after { left: 0; right: 0; }
.word span {
  position: absolute;
  left: 15px;
  top: 11px;
  font-size: 12px;
  font-weight: 700;
  line-height: 16px;
}
.tray {
  display: flex;
  position: relative;
  align-items: center;
  flex: 1;
  font-size: 13px;
}
.weather {
  position: relative;
  margin-left: 275px;
}
.weather-badge {
  position: absolute;
  top: -3px;
  right: -2px;
  width: 13px;
  height: 13px;
  background: #c8201f;
  border-radius: 50%;
  font-size: 9px;
  line-height: 13px;
  text-align: center;
}
.temp { margin-left: 6px; font-size: 14.300px; white-space: nowrap; }
.t-chev { margin-left: 25px; }
.t-meet { margin-left: 10px; }
.t-batt { margin-left: 11px; }
.t-wifi { margin-left: 9px; }
.t-vol { margin-left: 8px; }
.t-lang { margin-left: 9px; font-size: 12px; }
.clock {
  margin-left: 12px;
  font-size: 12px;
  line-height: 18px;
  text-align: center;
}
.t-note { margin-left: auto; margin-right: 25px; }
```

FILE: chart.js
```js
// Tree map of SUM(Vaastu Compliant) by Location.
// Left part is read off as plain columns, the rest spirals in: row, column, row, column...
const svg = document.getElementById('treemap');
const NS = 'http://www.w3.org/2000/svg';
const RIGHT = 1186;
const BOTTOM = 656;

function addRect(x0, y0, x1, y1, fill) {
  if (x1 <= x0 || y1 <= y0) return;
  const r = document.createElementNS(NS, 'rect');
  r.setAttribute('x', x0);
  r.setAttribute('y', y0);
  r.setAttribute('width', x1 - x0);
  r.setAttribute('height', y1 - y0);
  r.setAttribute('fill', fill);
  r.setAttribute('shape-rendering', 'crispEdges');
  svg.appendChild(r);
}

function addLabel(x, y, str, fill) {
  const t = document.createElementNS(NS, 'text');
  t.setAttribute('x', x);
  t.setAttribute('y', y);
  t.setAttribute('fill', fill);
  t.textContent = str;
  svg.appendChild(t);
}

const LIGHT = '#ecdcec';
const DARK = '#2e2a33';

// x0, x1, then each cell as [bottom, colour, label, label text y]
const columns = [
  [391, 502, [
    [309, '#7a4b75', 'Noida', 225, LIGHT],
    [406, '#825680', 'New Town', 330, LIGHT],
    [483, '#966592', 'Thane West', 427, LIGHT],
    [546, '#ad7a9f', 'Mira Road East', 504, LIGHT],
    [601, '#b67ca1', 'Rajarhat', 567, LIGHT],
    [656, '#b57da2', 'Kharghar', 622, LIGHT]
  ]],
  [503, 587, [
    [273, '#ba84a7', 'Ulwe', 225, DARK],
    [340, '#bc86a9', 'Tangra', 294, DARK],
    [396, '#c490b2', 'Dum Dum', 361, DARK],
    [452, '#c791b3', 'Garia', 417, DARK],
    [502, '#c997b7', 'Howrah', 473, DARK],
    [544, '#cc9dbd', 'Behala', 523, DARK],
    [584, '#cfa1c1', 'Nala Sopara', 565, DARK],
    [620, '#d2a5c5', 'Tollygunge', 605, DARK],
    [656, '#d3a6c6']
  ]],
  [588, 655, [
    [248, '#d6a8c7'], [293, '#d6a8c7'], [336, '#d6a9c7'], [378, '#d7a9c8'], [420, '#d7aac8'], [461, '#d8aac8'],
    [502, '#d8aac9', 'Powai', 482, DARK],
    [542, '#d8abc9', 'Alipore', 523, DARK],
    [581, '#d8abc9', 'Panvel', 563, DARK],
    [619, '#d9acca'],
    [656, '#d9acca', 'Chembur', 640, DARK]
  ]],
  [656, 713, [
    [247, '#dcafcd'], [287, '#dcafcd'], [326, '#dcafcd'], [364, '#dcafcd'], [401, '#ddafcd'], [437, '#ddb0ce'],
    [473, '#ddb0ce', 'Virar', 458, DARK],
    [506, '#deb1ce'], [537, '#deb1ce'], [568, '#deb1cf'], [598, '#dfb2cf'], [628, '#dfb2cf'], [656, '#dfb2cf']
  ]],
  [714, 762, [
    [237, '#e2b5d3'], [270, '#e2b5d3'], [302, '#e2b5d3'], [333, '#e2b6d4'], [364, '#e2b6d4'], [395, '#e2b6d4'],
    [426, '#e3b6d4'], [456, '#e3b7d4'], [485, '#e3b7d4'], [514, '#e3b7d5'], [543, '#e3b7d5'], [572, '#e4b8d5'],
    [600, '#e4b8d5'], [629, '#e4b8d5'], [656, '#e4b8d6']
  ]]
];

columns.forEach(([x0, x1, cells]) => {
  let y = 205;
  cells.forEach(([bottom, fill, label, ty, tc]) => {
    addRect(x0, y, x1, bottom, fill);
    if (label) addLabel(x0 + 7, ty, label, tc);
    y = bottom + 1;
  });
});

// Cut a length in n parts, first parts a bit bigger than the last
function cuts(a, b, n) {
  const w = [];
  let total = 0;
  for (let i = 0; i < n; i++) {
    w.push(1 - 0.13 * i / Math.max(n - 1, 1));
    total += w[i];
  }
  const out = [a];
  let pos = a;
  w.forEach(v => { pos += (b - a) * v / total; out.push(Math.round(pos)); });
  return out;
}

function shade(t) {
  const c0 = [231, 187, 216];
  const c1 = [238, 201, 228];
  const k = Math.min(t, 1);
  return `rgb(${c0.map((v, i) => Math.round(v + (c1[i] - v) * k)).join(',')})`;
}

function row(y0, y1, x0, n, t) {
  const c = cuts(x0, RIGHT + 1, n);
  for (let i = 0; i < n; i++) addRect(c[i], y0, Math.min(c[i + 1] - 1, RIGHT), y1, shade(t));
}

function col(x0, x1, y0, n, t) {
  const c = cuts(y0, BOTTOM + 1, n);
  for (let i = 0; i < n; i++) addRect(x0, c[i], x1, Math.min(c[i + 1] - 1, BOTTOM), shade(t));
}

// type, then a box edge pair, the other start and the number of cells
const spiral = [
  ['r', 205, 248, 763, 15], ['c', 763, 802, 249, 16],
  ['r', 249, 284, 803, 16], ['c', 803, 836, 286, 17],
  ['r', 286, 316, 837, 18], ['c', 837, 866, 317, 18],
  ['r', 317, 343, 867, 19], ['c', 867, 892, 344, 19],
  ['r', 344, 368, 893, 20], ['c', 893, 915, 369, 20],
  ['r', 369, 390, 916, 20], ['c', 916, 936, 391, 20],
  ['r', 391, 410, 937, 20], ['c', 937, 956, 411, 21],
  ['r', 411, 429, 957, 21], ['c', 957, 972, 430, 21],
  ['r', 430, 446, 973, 21], ['c', 973, 989, 447, 21],
  ['r', 447, 461, 990, 22], ['c', 990, 1003, 462, 21],
  ['r', 462, 475, 1004, 20], ['c', 1004, 1016, 476, 22],
  ['r', 476, 487, 1017, 21], ['c', 1017, 1028, 488, 23],
  ['r', 488, 499, 1029, 21], ['c', 1029, 1039, 500, 22],
  ['r', 500, 509, 1040, 24], ['r', 510, 519, 1040, 24],
  ['c', 1040, 1049, 520, 23], ['c', 1050, 1058, 520, 23],
  ['r', 520, 528, 1059, 24], ['r', 529, 537, 1059, 24],
  ['c', 1059, 1067, 538, 23],
  ['r', 538, 545, 1068, 21],
  ['c', 1068, 1074, 546, 24], ['c', 1075, 1081, 546, 24],
  ['r', 546, 552, 1082, 22], ['r', 553, 559, 1082, 22],
  ['c', 1082, 1088, 560, 22], ['c', 1089, 1095, 560, 22],
  ['r', 560, 566, 1096, 20],
  ['c', 1096, 1102, 567, 22],
  ['r', 567, 571, 1103, 22], ['r', 572, 577, 1103, 22]
];

spiral.forEach(([type, a, b, c, n], i) => {
  const t = i / 16;
  if (type === 'r') row(a, b, c, n, t);
  else col(a, b, c, n, t);
});

// Tiny marks down in the corner: the same spiral at a steady step
let x = 1103;
let y = 578;
while (y < 640) {
  col(x, x + 4, y, Math.round((BOTTOM - y) / 4.8), 1);
  x += 5;
  const cellW = 4.6 - (y - 578) / 60;
  row(y, y + 4, x, Math.round((RIGHT - x) / cellW), 1);
  y += 5;
}

// Last marks are only a few pixels each, and thin out into the white
col(x, x + 3, y, 3, 1);
[
  [1173, 645], [1177, 645], [1180, 645], [1185, 645],
  [1173, 649], [1179, 650], [1182, 652], [1173, 654], [1168, 655]
].forEach(([px, py]) => addRect(px, py, px + 2, py + 2, '#eecbe5'));
```
